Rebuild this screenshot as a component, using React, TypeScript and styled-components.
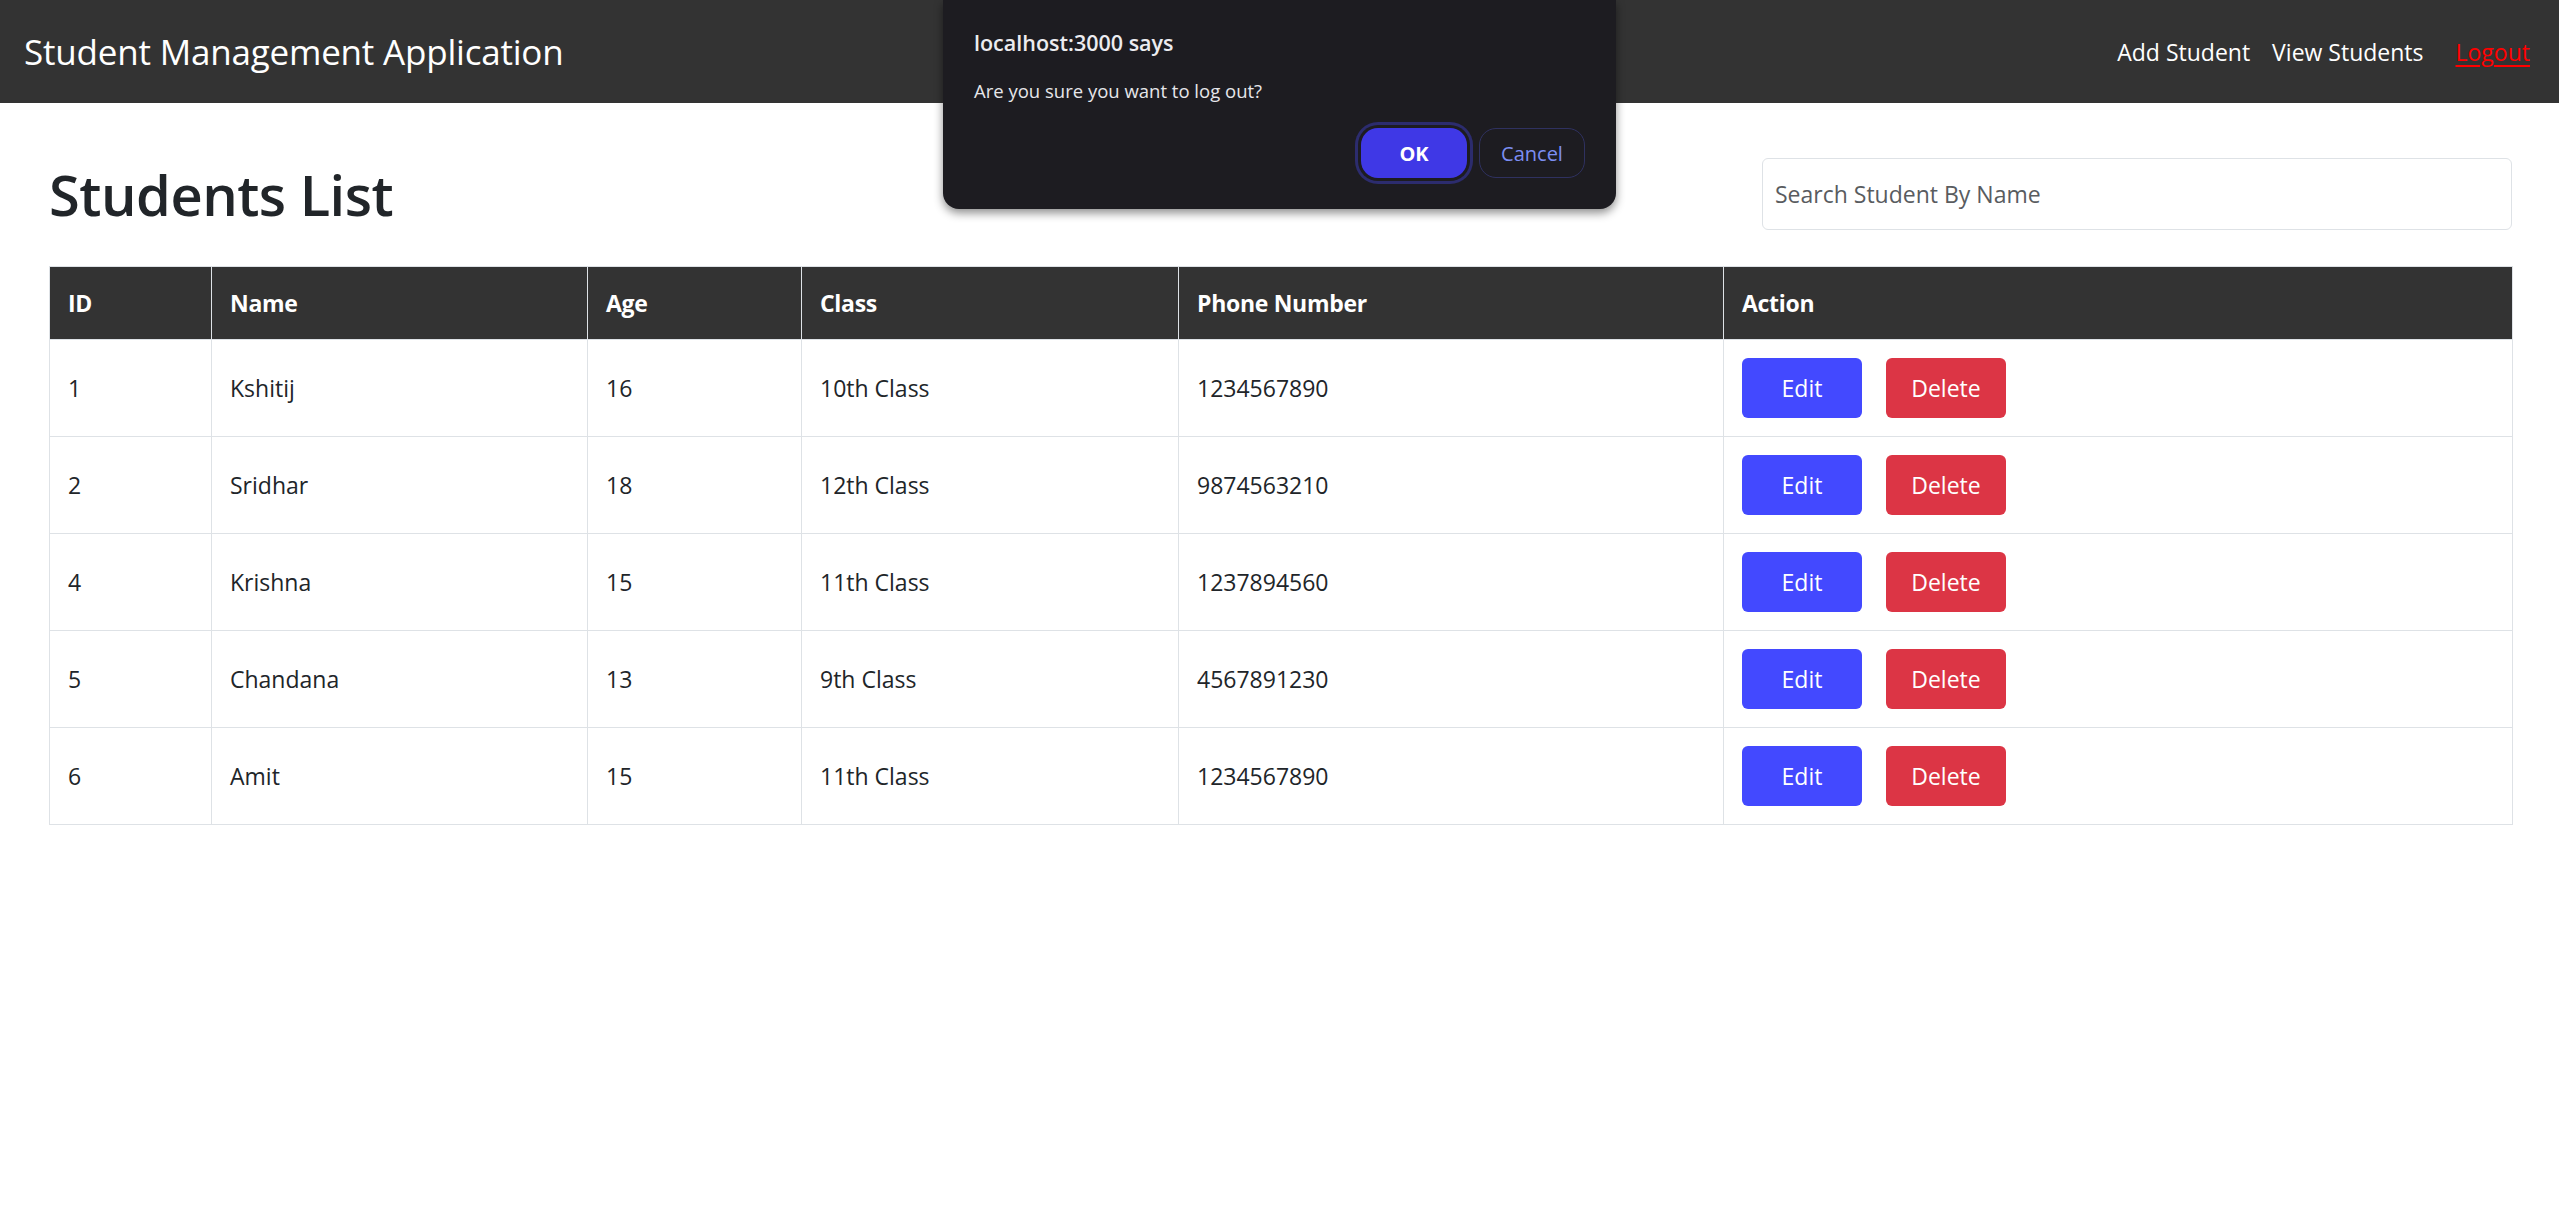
import React from "react";
import styled, { createGlobalStyle } from "styled-components";

const Global = createGlobalStyle`
  html, body { margin: 0; padding: 0; background: #ffffff; }
  body { font-family: "Open Sans", "Noto Sans", sans-serif; color: #212529; }
  * { box-sizing: border-box; }
`;

const Page = styled.div`
  position: relative;
  min-height: 1222px;
`;

const NavBar = styled.nav`
  height: 103px;
  background: #333333;
  display: flex;
  align-items: center;
  justify-content: space-between;
  padding: 0 29px 0 24px;
`;

const Brand = styled.div`
  color: #ffffff;
  font-size: 35px;
  letter-spacing: -0.2px;
`;

const NavLinks = styled.div`
  display: flex;
  align-items: center;
  gap: 22px;
`;

const NavLink = styled.a<{ $danger?: boolean }>`
  color: ${(p) => (p.$danger ? "#ff0000" : "#ffffff")};
  text-decoration: ${(p) => (p.$danger ? "underline" : "none")};
  text-underline-offset: 4px;
  font-size: 23px;
  margin-left: ${(p) => (p.$danger ? "10px" : "0")};
  cursor: pointer;
`;

const Main = styled.main`
  padding: 0 47px 0 49px;
`;

const HeaderRow = styled.div`
  display: flex;
  justify-content: space-between;
  align-items: center;
  padding: 55px 0 36px;
`;

const Title = styled.h1`
  margin: 0;
  font-size: 56px;
  font-weight: 600;
  letter-spacing: -0.5px;
  color: #212529;
  line-height: 72px;
`;

const Search = styled.input`
  width: 750px;
  height: 72px;
  border: 1.5px solid #dee2e6;
  border-radius: 6px;
  padding: 0 12px;
  font-family: inherit;
  font-size: 23px;
  color: #212529;
  &::placeholder { color: #595c5f; }
  outline: none;
`;

const Table = styled.table`
  width: 2463px;
  border-collapse: collapse;
  table-layout: fixed;
  border: 1.5px solid #dee2e6;
`;

const Th = styled.th<{ $w: number }>`
  width: ${(p) => p.$w}px;
  height: 73px;
  background: #333333;
  color: #ffffff;
  font-size: 23px;
  font-weight: 700;
  text-align: left;
  padding: 0 18px;
  border: 1.5px solid #dee2e6;
  letter-spacing: -0.3px;
`;

const Td = styled.td`
  height: 97px;
  padding: 0 18px;
  font-size: 23px;
  color: #212529;
  border: 1.5px solid #dee2e6;
  vertical-align: middle;
`;

const Actions = styled.div`
  display: flex;
  gap: 24px;
`;

const ActionButton = styled.button<{ $variant: "edit" | "delete" }>`
  width: 120px;
  height: 60px;
  border: none;
  border-radius: 6px;
  background: ${(p) => (p.$variant === "edit" ? "#4349ff" : "#dc3545")};
  color: #ffffff;
  font-family: inherit;
  font-size: 23px;
  cursor: pointer;
`;

const Dialog = styled.div`
  position: absolute;
  top: 0;
  left: 943px;
  width: 673px;
  height: 209px;
  background: #1d1c21;
  border-radius: 0 0 16px 16px;
  box-shadow: 0 4px 10px rgba(0, 0, 0, 0.45);
  padding: 24px 31px 31px 31px;
  display: flex;
  flex-direction: column;
`;

const DialogTitle = styled.div`
  color: #ececf0;
  font-size: 21.5px;
  font-weight: 600;
  line-height: 38px;
`;

const DialogMessage = styled.div`
  color: #e6e6ea;
  font-size: 18.5px;
  line-height: 30px;
  margin-top: 14px;
`;

const DialogButtons = styled.div`
  display: flex;
  justify-content: flex-end;
  gap: 12px;
  margin-top: auto;
`;

const DialogButton = styled.button<{ $primary?: boolean }>`
  width: 106px;
  height: 50px;
  border-radius: 17px;
  font-family: inherit;
  font-size: 20px;
  font-weight: ${(p) => (p.$primary ? 700 : 500)};
  background: ${(p) => (p.$primary ? "#3f38e6" : "transparent")};
  color: ${(p) => (p.$primary ? "#ffffff" : "#7c8ef2")};
  border: ${(p) => (p.$primary ? "none" : "1.5px solid #2f3160")};
  box-shadow: ${(p) => (p.$primary ? "0 0 0 3px #1d1c21, 0 0 0 6px #2c2c6e" : "none")};
`;

const columns = [
  { label: "ID", w: 162 },
  { label: "Name", w: 376 },
  { label: "Age", w: 214 },
  { label: "Class", w: 377 },
  { label: "Phone Number", w: 545 },
  { label: "Action", w: 789 },
];

const students = [
  { id: 1, name: "Kshitij", age: 16, cls: "10th Class", phone: "1234567890" },
  { id: 2, name: "Sridhar", age: 18, cls: "12th Class", phone: "9874563210" },
  { id: 4, name: "Krishna", age: 15, cls: "11th Class", phone: "1237894560" },
  { id: 5, name: "Chandana", age: 13, cls: "9th Class", phone: "4567891230" },
  { id: 6, name: "Amit", age: 15, cls: "11th Class", phone: "1234567890" },
];

export default function App() {
  return (
    <Page>
      <Global />
      <NavBar>
        <Brand>Student Management Application</Brand>
        <NavLinks>
          <NavLink>Add Student</NavLink>
          <NavLink>View Students</NavLink>
          <NavLink $danger>Logout</NavLink>
        </NavLinks>
      </NavBar>
      <Main>
        <HeaderRow>
          <Title>Students List</Title>
          <Search placeholder="Search Student By Name" />
        </HeaderRow>
        <Table>
          <thead>
            <tr>
              {columns.map((c) => (
                <Th key={c.label} $w={c.w}>
                  {c.label}
                </Th>
              ))}
            </tr>
          </thead>
          <tbody>
            {students.map((s) => (
              <tr key={s.id}>
                <Td>{s.id}</Td>
                <Td>{s.name}</Td>
                <Td>{s.age}</Td>
                <Td>{s.cls}</Td>
                <Td>{s.phone}</Td>
                <Td>
                  <Actions>
                    <ActionButton $variant="edit">Edit</ActionButton>
                    <ActionButton $variant="delete">Delete</ActionButton>
                  </Actions>
                </Td>
              </tr>
            ))}
          </tbody>
        </Table>
      </Main>
      <Dialog>
        <DialogTitle>localhost:3000 says</DialogTitle>
        <DialogMessage>Are you sure you want to log out?</DialogMessage>
        <DialogButtons>
          <DialogButton $primary>OK</DialogButton>
          <DialogButton>Cancel</DialogButton>
        </DialogButtons>
      </Dialog>
    </Page>
  );
}
